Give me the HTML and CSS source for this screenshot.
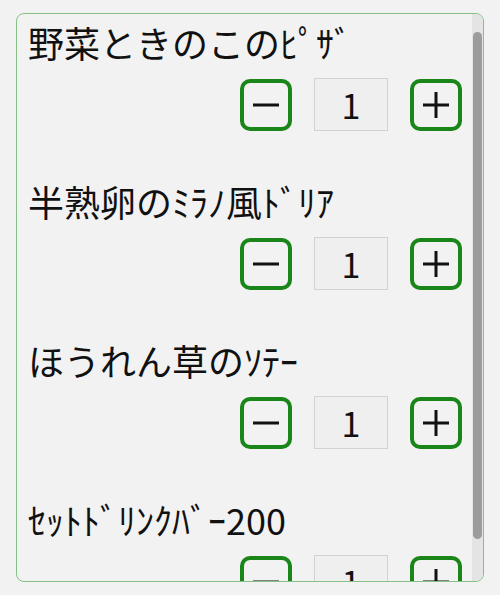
FILE: index.html
```
<!DOCTYPE html>
<html lang="ja">
<head>
    <meta charset="UTF-8">
    <meta name="viewport" content="width=device-width, initial-scale=1.0">
    <title>注文</title>
    <link rel="stylesheet" href="styles.css">
</head>
<body>
    <!-- Order list -->
    <div class="menu">
        <div class="menu-list">
            <div class="item">
                <div class="item-name">野菜ときのこのﾋﾟｻﾞ</div>
                <div class="qty">
                    <button class="qty-btn" aria-label="減らす">
                        <svg width="28" height="28" viewBox="0 0 28 28"><path d="M1 14H27" stroke="#111" stroke-width="3"/></svg>
                    </button>
                    <input class="qty-value" type="text" value="1" readonly>
                    <button class="qty-btn" aria-label="増やす">
                        <svg width="28" height="28" viewBox="0 0 28 28"><path d="M1 14H27M14 1V27" stroke="#111" stroke-width="3"/></svg>
                    </button>
                </div>
            </div>

            <div class="item">
                <div class="item-name">半熟卵のﾐﾗﾉ風ﾄﾞﾘｱ</div>
                <div class="qty">
                    <button class="qty-btn" aria-label="減らす">
                        <svg width="28" height="28" viewBox="0 0 28 28"><path d="M1 14H27" stroke="#111" stroke-width="3"/></svg>
                    </button>
                    <input class="qty-value" type="text" value="1" readonly>
                    <button class="qty-btn" aria-label="増やす">
                        <svg width="28" height="28" viewBox="0 0 28 28"><path d="M1 14H27M14 1V27" stroke="#111" stroke-width="3"/></svg>
                    </button>
                </div>
            </div>

            <div class="item">
                <div class="item-name">ほうれん草のｿﾃｰ</div>
                <div class="qty">
                    <button class="qty-btn" aria-label="減らす">
                        <svg width="28" height="28" viewBox="0 0 28 28"><path d="M1 14H27" stroke="#111" stroke-width="3"/></svg>
                    </button>
                    <input class="qty-value" type="text" value="1" readonly>
                    <button class="qty-btn" aria-label="増やす">
                        <svg width="28" height="28" viewBox="0 0 28 28"><path d="M1 14H27M14 1V27" stroke="#111" stroke-width="3"/></svg>
                    </button>
                </div>
            </div>

            <div class="item">
                <div class="item-name">ｾｯﾄﾄﾞﾘﾝｸﾊﾞｰ200</div>
                <div class="qty">
                    <button class="qty-btn" aria-label="減らす">
                        <svg width="28" height="28" viewBox="0 0 28 28"><path d="M1 14H27" stroke="#111" stroke-width="3"/></svg>
                    </button>
                    <input class="qty-value" type="text" value="1" readonly>
                    <button class="qty-btn" aria-label="増やす">
                        <svg width="28" height="28" viewBox="0 0 28 28"><path d="M1 14H27M14 1V27" stroke="#111" stroke-width="3"/></svg>
                    </button>
                </div>
            </div>
        </div>

        <!-- Scrollbar -->
        <div class="scrollbar">
            <div class="scrollbar-thumb"></div>
        </div>
    </div>
</body>
</html>
```

FILE: styles.css
```
/* Global Styles */
body {
    font-family: "Noto Sans CJK JP", sans-serif;
    margin: 0;
    padding: 13px 16px;
    background-color: #f2f2f2;
    color: #111;
}

/* Scroll box */
.menu {
    display: flex;
    height: 569px;
    box-sizing: border-box;
    border: 1px solid #86c086;
    border-radius: 8px;
    overflow: hidden;
    background-color: #f2f2f2;
}

.menu-list {
    flex: 1;
    display: flex;
    flex-direction: column;
    gap: 50px;
    padding: 8px 10px 0 11px;
    overflow: hidden;
}

.item {
    flex-shrink: 0;
}

/* Scrollbar */
.scrollbar {
    width: 11px;
    padding: 0 1px;
    box-sizing: border-box;
    background-color: #e4e4e4;
}

.scrollbar-thumb {
    margin-top: 18px;
    height: 507px;
    border-radius: 5px;
    background-color: #9c9c9c;
}

/* Item */
.item-name {
    font-size: 36px;
    line-height: 40px;
    white-space: nowrap;
}

.qty {
    display: flex;
    justify-content: flex-end;
    align-items: center;
    gap: 22px;
    margin-top: 16px;
}

.qty-btn {
    width: 52px;
    height: 52px;
    box-sizing: border-box;
    padding: 0;
    border: 4px solid #1a861a;
    border-radius: 10px;
    background-color: transparent;
    display: flex;
    align-items: center;
    justify-content: center;
    cursor: pointer;
}

.qty-value {
    width: 74px;
    height: 53px;
    box-sizing: border-box;
    padding: 0;
    border: 1px solid #d2d2d2;
    background-color: #efefef;
    font-family: "Noto Sans CJK JP", sans-serif;
    font-size: 34px;
    color: #111;
    text-align: center;
}
```
